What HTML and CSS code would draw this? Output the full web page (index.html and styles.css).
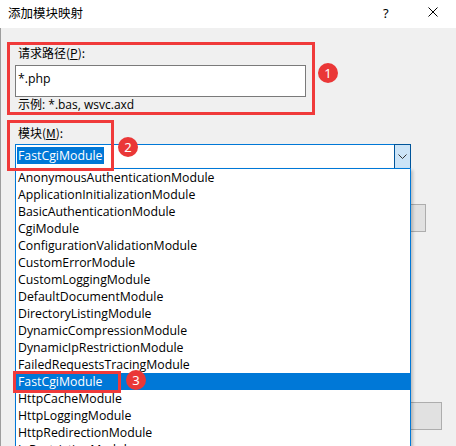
FILE: index.html
```html
<!DOCTYPE html>
<html lang="zh-CN">
<head>
<meta charset="utf-8">
<title>添加模块映射</title>
<link rel="stylesheet" href="styles.css">
</head>
<body>
<div class="window">
  <div class="titlebar">
    <span class="title">添加模块映射</span>
    <span class="tb-help">?</span>
    <span class="tb-close">
      <svg width="10" height="10" viewBox="0 0 10 10"><path d="M0.5 0.5 L9.5 9.5 M9.5 0.5 L0.5 9.5" stroke="#000" stroke-width="1" fill="none"/></svg>
    </span>
  </div>
  <div class="dialog">
    <div class="label lbl-path">请求路径(<u>P</u>):</div>
    <div class="textbox">*.php</div>
    <div class="hint">示例: *.bas, wsvc.axd</div>
    <div class="label lbl-module">模块(<u>M</u>):</div>
    <div class="combo">
      <div class="combo-text"><span class="sel">FastCgiModule</span></div>
      <div class="combo-btn">
        <svg width="9" height="5" viewBox="0 0 9 5"><path d="M0.5 0.5 L4.5 4.5 L8.5 0.5" stroke="#333" stroke-width="1" fill="none"/></svg>
      </div>
    </div>
    <div class="btn btn-browse">...</div>
    <div class="btn btn-bottom">确定</div>
  </div>

  <ul class="popup">
    <li>AnonymousAuthenticationModule</li>
    <li>ApplicationInitializationModule</li>
    <li>BasicAuthenticationModule</li>
    <li>CgiModule</li>
    <li>ConfigurationValidationModule</li>
    <li>CustomErrorModule</li>
    <li>CustomLoggingModule</li>
    <li>DefaultDocumentModule</li>
    <li>DirectoryListingModule</li>
    <li>DynamicCompressionModule</li>
    <li>DynamicIpRestrictionModule</li>
    <li>FailedRequestsTracingModule</li>
    <li class="active">FastCgiModule</li>
    <li>HttpCacheModule</li>
    <li>HttpLoggingModule</li>
    <li>HttpRedirectionModule</li>
    <li>IpRestrictionModule</li>
  </ul>

  <div class="mark mark-1"></div>
  <div class="mark mark-2"></div>
  <div class="mark mark-3"></div>
  <div class="badge badge-1">1</div>
  <div class="badge badge-2">2</div>
  <div class="badge badge-3">3</div>
</div>
</body>
</html>
```

FILE: styles.css
```css
* { box-sizing: border-box; }
html, body {
  margin: 0;
  padding: 0;
}
body {
  width: 456px;
  height: 446px;
  overflow: hidden;
  background: #f0f0f0;
  font-family: "Open Sans", "Noto Sans CJK SC", sans-serif;
  font-size: 12.3px;
  color: #000;
}
.window {
  position: relative;
  width: 456px;
  height: 446px;
  overflow: hidden;
}
.titlebar {
  height: 28px;
  background: #fff;
  display: flex;
  align-items: center;
  padding-left: 8px;
}
.title {
  font-family: "Noto Sans CJK SC", sans-serif;
  font-size: 12.5px;
  line-height: 16px;
  flex: 1;
  margin-top: -2px;
}
.tb-help {
  font-size: 13px;
  width: 12px;
  margin-right: 33px;
  margin-top: -3px;
  font-family: "Noto Sans", sans-serif;
}
.tb-close {
  width: 10px;
  height: 10px;
  margin-right: 18px;
  margin-top: -4px;
  display: flex;
}
.dialog {
  height: 418px;
  border-left: 1px solid #9d9d9d;
  padding: 17px 0 0 14px;
  display: flex;
  flex-direction: column;
  align-items: flex-start;
}
.label {
  line-height: 15px;
  padding-left: 3px;
  font-family: "Noto Sans CJK SC", sans-serif;
  font-size: 12px;
}
.label u { text-underline-offset: 1px; }
.textbox {
  margin-top: 5px;
  width: 291px;
  height: 32px;
  border: 1px solid #7a7a7a;
  background: #fff;
  padding: 5px 0 0 2px;
  line-height: 15px;
}
.hint {
  line-height: 15px;
  padding-left: 3px;
  font-size: 12px;
}
.lbl-module { margin-top: 13px; }
.combo {
  margin-top: 4px;
  width: 396px;
  height: 25px;
  border: 1px solid #0078d7;
  background: #fff;
  display: flex;
}
.combo-text {
  flex: 1;
  padding: 2px 0 0 1px;
}
.sel {
  display: inline-block;
  background: #0078d7;
  color: #fff;
  line-height: 17px;
  padding: 0 2px 0 1px;
}
.combo-btn {
  width: 17px;
  height: 25px;
  margin: -1px -1px 0 0;
  border: 1px solid #005499;
  background: #cce4f7;
  display: flex;
  align-items: center;
  justify-content: center;
}
.btn {
  height: 28px;
  border: 1px solid #adadad;
  background: #e1e1e1;
  display: flex;
  align-items: center;
  justify-content: center;
  font-family: "Noto Sans CJK SC", sans-serif;
  font-size: 12px;
}
.btn-browse {
  margin-top: 35px;
  margin-left: 366px;
  width: 45px;
}
.btn-bottom {
  margin-top: 170px;
  margin-left: 306px;
  width: 121px;
}
.popup {
  position: absolute;
  left: 15px;
  top: 168px;
  width: 396px;
  height: 300px;
  margin: 0;
  padding: 0;
  list-style: none;
  background: #fff;
  border: 1px solid #0078d7;
  box-shadow: 2px 2px 3px rgba(0, 0, 0, 0.22);
}
.popup li {
  height: 17px;
  line-height: 17px;
  padding-left: 2px;
  white-space: nowrap;
}
.popup li.active {
  background: #0078d7;
  color: #fff;
}
.mark {
  position: absolute;
  border: 3px solid #f03a3a;
}
.mark-1 { left: 7px; top: 42px; width: 308px; height: 73px; }
.mark-2 { left: 7px; top: 120px; width: 107px; height: 51px; }
.mark-3 { left: 13px; top: 371px; width: 108px; height: 22px; }
.badge {
  position: absolute;
  width: 20px;
  height: 20px;
  border-radius: 50%;
  background: #ea3737;
  color: #fff;
  font-family: "Noto Sans", sans-serif;
  font-size: 13px;
  line-height: 20px;
  text-align: center;
}
.badge-1 { left: 318px; top: 63px; }
.badge-2 { left: 118px; top: 137px; }
.badge-3 { left: 126px; top: 370px; }
```
